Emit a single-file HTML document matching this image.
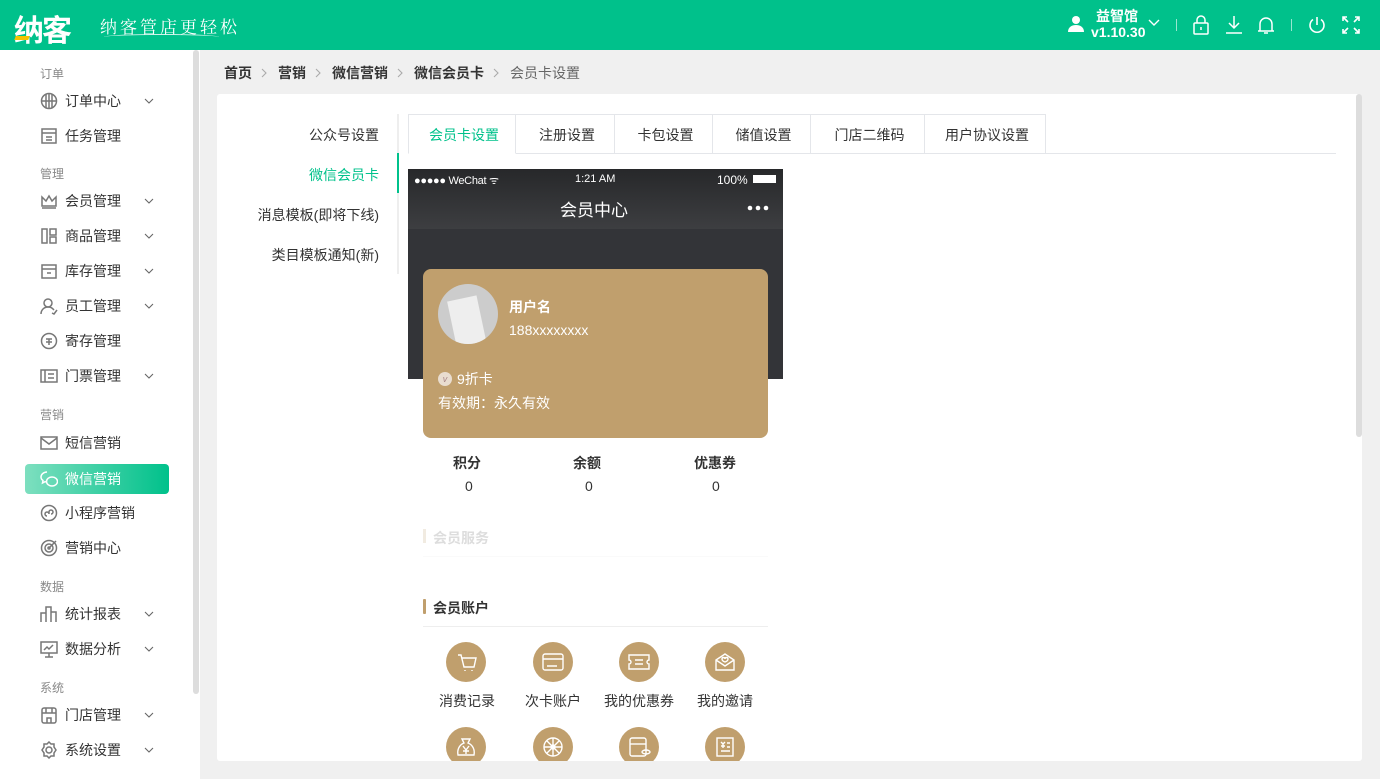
<!DOCTYPE html>
<html><head><meta charset="utf-8"><style>
*{margin:0;padding:0;box-sizing:border-box}
body{width:1380px;height:779px;overflow:hidden;background:#f0f0f0;font-family:"Liberation Sans","Noto Sans CJK SC",sans-serif;font-size:14px;color:#333;position:relative}
.hdr{position:absolute;left:0;top:0;width:1380px;height:50px;background:#00c18b;color:#fff}
.abs{position:absolute}
.side{position:absolute;left:0;top:50px;width:200px;height:729px;background:#fff}
.sb{position:absolute;left:193px;top:50px;width:6px;height:644px;background:#ddd;border-radius:3px}
.grp{position:absolute;left:40px;font-size:12px;color:#888}
.it{position:absolute;left:40px;height:28px;line-height:28px;font-size:14px;color:#333;display:flex;align-items:center}
.it svg{width:18px;height:18px;margin-right:7px;fill:none;stroke:#777;stroke-width:1.5}
.chev{position:absolute;left:144px;width:10px;height:6px}
.card{position:absolute;left:217px;top:94px;width:1145px;height:667px;background:#fff;border-radius:3px}
.tab{position:absolute;top:114px;height:40px;line-height:40px;text-align:center;border:1px solid #e4e6ea;border-left:none;font-size:14px;color:#333}
.sub{position:absolute;right:1001px;font-size:14px;color:#333;text-align:right}
.ic{position:absolute;width:40px;height:40px;border-radius:50%;background:#c09f6d}
.ic svg{width:40px;height:40px;fill:none;stroke:#fff;stroke-width:1.4}
.lb{position:absolute;width:90px;text-align:center;font-size:14px;color:#333}
.bc{display:inline-block;width:7px;height:10px;margin:0 10px 0 9px}
</style></head><body>
<svg width="0" height="0" style="position:absolute"><defs><symbol id="cv" viewBox="0 0 10 6"><path d="M1 1l4 4 4-4" stroke="#666" fill="none" stroke-width="1.1"/></symbol><symbol id="gt" viewBox="0 0 7 10"><path d="M1 1l4 4-4 4" stroke="#aaa" fill="none" stroke-width="1.1"/></symbol></defs></svg>
<div class="hdr">
 <div class="abs" style="left:14px;top:6px;font-size:30px;font-weight:bold;letter-spacing:-2px">纳客</div>
 <div class="abs" style="left:15px;top:36px;width:14px;height:4px;background:#f5c400;transform:skewX(-20deg)"></div>
 <div class="abs" style="left:100px;top:13px;font-size:17px;font-family:'Noto Serif CJK SC',serif;letter-spacing:3px">纳客管店更轻松</div>
 <div class="abs" style="left:104px;top:34px;width:115px;height:6px;border-top:1px solid rgba(255,255,255,.8);border-radius:60% 60% 0 0"></div>
 <svg class="abs" style="left:1067px;top:15px" width="18" height="18" viewBox="0 0 18 18"><circle cx="9" cy="5" r="4" fill="#fff"/><path d="M1 17c0-5 4-7 8-7s8 2 8 7z" fill="#fff"/></svg>
 <div class="abs" style="left:1096px;top:6px;font-size:14px;font-weight:bold">益智馆</div>
 <div class="abs" style="left:1091px;top:24px;font-size:14px;font-weight:bold">v1.10.30</div>
 <svg class="abs" style="left:1148px;top:19px" width="12" height="8" viewBox="0 0 12 8"><path d="M1 1l5 5 5-5" stroke="#fff" fill="none" stroke-width="1.4"/></svg>
 <div class="abs" style="left:1176px;top:19px;width:1px;height:12px;background:rgba(255,255,255,.6)"></div>
 <svg class="abs" style="left:1192px;top:15px" width="18" height="20" viewBox="0 0 18 20" fill="none" stroke="#fff" stroke-width="1.5"><rect x="2" y="8" width="14" height="11" rx="1"/><path d="M5 8V5a4 4 0 018 0v3M9 12v3"/></svg>
 <svg class="abs" style="left:1225px;top:15px" width="18" height="20" viewBox="0 0 18 20" fill="none" stroke="#fff" stroke-width="1.5"><path d="M9 1v12M4 8l5 5 5-5M1 18h16"/></svg>
 <svg class="abs" style="left:1257px;top:15px" width="18" height="20" viewBox="0 0 18 20" fill="none" stroke="#fff" stroke-width="1.5"><path d="M3 16V9a6 6 0 0112 0v7zM1 16h16M7 18h4"/></svg>
 <div class="abs" style="left:1291px;top:19px;width:1px;height:12px;background:rgba(255,255,255,.6)"></div>
 <svg class="abs" style="left:1307px;top:15px" width="20" height="20" viewBox="0 0 20 20" fill="none" stroke="#fff" stroke-width="1.6"><path d="M10 2v8M6 4.5a7 7 0 108 0"/></svg>
 <svg class="abs" style="left:1342px;top:16px" width="18" height="18" viewBox="0 0 18 18" fill="none" stroke="#fff" stroke-width="1.6"><path d="M1 5V1h4M1 1l5 5M17 5V1h-4M17 1l-5 5M1 13v4h4M1 17l5-5M17 13v4h-4M17 17l-5-5"/></svg>
</div>
<div class="side"></div><div class="sb"></div>
<div class="grp" style="top:65px">订单</div>
<div class="it" style="top:87px"><svg viewBox="0 0 18 18"><circle cx="9" cy="9" r="7.5"/><path d="M1.5 9h15M9 1.5v15M6 2.5v13M12 2.5v13"/></svg>订单中心</div><svg class="chev" style="top:98px"><use href="#cv"/></svg>
<div class="it" style="top:122px"><svg viewBox="0 0 18 18"><rect x="2" y="2" width="14" height="14"/><path d="M2 6h14M6 10h6M6 13h6"/></svg>任务管理</div>
<div class="grp" style="top:165px">管理</div>
<div class="it" style="top:187px"><svg viewBox="0 0 18 18"><path d="M2 5l4 4 3-5 3 5 4-4v9H2zM2 16h14"/></svg>会员管理</div><svg class="chev" style="top:198px"><use href="#cv"/></svg>
<div class="it" style="top:222px"><svg viewBox="0 0 18 18"><rect x="2" y="2" width="5" height="14"/><rect x="10" y="2" width="6" height="6"/><rect x="10" y="10" width="6" height="6"/></svg>商品管理</div><svg class="chev" style="top:233px"><use href="#cv"/></svg>
<div class="it" style="top:257px"><svg viewBox="0 0 18 18"><rect x="2" y="3" width="14" height="13"/><path d="M2 7h14M7 11h4"/></svg>库存管理</div><svg class="chev" style="top:268px"><use href="#cv"/></svg>
<div class="it" style="top:292px"><svg viewBox="0 0 18 18"><circle cx="8" cy="6" r="4"/><path d="M1 17c0-4 3-7 7-7s5 2 6 3M12 16l2 1 3-4"/></svg>员工管理</div><svg class="chev" style="top:303px"><use href="#cv"/></svg>
<div class="it" style="top:327px"><svg viewBox="0 0 18 18"><circle cx="9" cy="9" r="7.5"/><path d="M6 7h6M6 10h6M9 7v6"/></svg>寄存管理</div>
<div class="it" style="top:362px"><svg viewBox="0 0 18 18"><rect x="1" y="3" width="16" height="12"/><path d="M5 3v12M8 7h6M8 11h6"/></svg>门票管理</div><svg class="chev" style="top:373px"><use href="#cv"/></svg>
<div class="grp" style="top:406px">营销</div>
<div class="it" style="top:429px"><svg viewBox="0 0 18 18"><rect x="1" y="3" width="16" height="12"/><path d="M1 4l8 6 8-6"/></svg>短信营销</div>
<div class="abs" style="left:25px;top:464px;width:144px;height:30px;border-radius:4px;background:linear-gradient(90deg,#7ddfbf,#00c18b)"></div>
<div class="it" style="top:465px;color:#fff"><svg viewBox="0 0 18 18" style="stroke:#fff"><path d="M7 2C3.5 2 1 4.5 1 7c0 1.5.8 2.7 2 3.5L2.5 13l2.5-1.3c.6.2 1.3.3 2 .3"/><ellipse cx="12" cy="11.5" rx="5.5" ry="4.5"/></svg>微信营销</div>
<div class="it" style="top:499px"><svg viewBox="0 0 18 18"><circle cx="9" cy="9" r="7.5"/><path d="M7 12a2 2 0 112-2V8a2 2 0 112 2"/></svg>小程序营销</div>
<div class="it" style="top:534px"><svg viewBox="0 0 18 18"><circle cx="9" cy="9" r="7.5"/><circle cx="9" cy="9" r="4"/><circle cx="9" cy="9" r="1"/><path d="M9 9l7-7"/></svg>营销中心</div>
<div class="grp" style="top:578px">数据</div>
<div class="it" style="top:600px"><svg viewBox="0 0 18 18"><path d="M1 17V8h5v9M6 17V2h5v15M11 17V7h5v10"/></svg>统计报表</div><svg class="chev" style="top:611px"><use href="#cv"/></svg>
<div class="it" style="top:635px"><svg viewBox="0 0 18 18"><rect x="1" y="2" width="16" height="11"/><path d="M9 13v4M5 17h8M4 10l3-3 2 2 4-4"/></svg>数据分析</div><svg class="chev" style="top:646px"><use href="#cv"/></svg>
<div class="grp" style="top:679px">系统</div>
<div class="it" style="top:701px"><svg viewBox="0 0 18 18"><rect x="2" y="2" width="14" height="15" rx="2"/><path d="M2 7h14M6 2v5M12 2v5M7 17v-5h4v5"/></svg>门店管理</div><svg class="chev" style="top:712px"><use href="#cv"/></svg>
<div class="it" style="top:736px"><svg viewBox="0 0 18 18"><path d="M9 1l2 2h3v3l2 3-2 3v3h-3l-2 2-2-2H4v-3L2 9l2-3V3h3z"/><circle cx="9" cy="9" r="3"/></svg>系统设置</div><svg class="chev" style="top:747px"><use href="#cv"/></svg>

<div class="abs" style="left:224px;top:63px;font-size:14px;font-weight:bold;color:#333;white-space:nowrap">首页<svg class="bc"><use href="#gt"/></svg>营销<svg class="bc"><use href="#gt"/></svg>微信营销<svg class="bc"><use href="#gt"/></svg>微信会员卡<svg class="bc"><use href="#gt"/></svg><span style="font-weight:normal;color:#666">会员卡设置</span></div>
<div class="card"></div>
<div class="abs" style="left:1356px;top:94px;width:6px;height:343px;background:#ddd;border-radius:3px"></div>
<div class="sub" style="top:125px">公众号设置</div>
<div class="sub" style="top:165px;color:#00c18b">微信会员卡</div>
<div class="sub" style="top:205px">消息模板(即将下线)</div>
<div class="sub" style="top:245px">类目模板通知(新)</div>
<div class="abs" style="left:397px;top:114px;width:2px;height:160px;background:#eee"></div>
<div class="abs" style="left:397px;top:153px;width:2px;height:40px;background:#00c18b"></div>
<div class="abs" style="left:408px;top:153px;width:928px;height:1px;background:#e4e6ea"></div>
<div class="tab" style="left:408px;width:108px;border-left:1px solid #e4e6ea;border-bottom-color:#fff;color:#00c18b;padding-left:4px">会员卡设置</div>
<div class="tab" style="left:516px;width:99px;padding-left:4px">注册设置</div>
<div class="tab" style="left:615px;width:98px;padding-left:4px">卡包设置</div>
<div class="tab" style="left:713px;width:98px;padding-left:4px">储值设置</div>
<div class="tab" style="left:811px;width:114px;padding-left:4px">门店二维码</div>
<div class="tab" style="left:925px;width:121px;padding-left:4px">用户协议设置</div>

<div class="abs" style="left:408px;top:169px;width:375px;height:210px;background:#333438"></div>
<div class="abs" style="left:408px;top:169px;width:375px;height:60px;background:linear-gradient(#27282a,#3d3e41)"></div>
<div class="abs" style="left:414px;top:173px;font-size:11px;color:#fff;letter-spacing:-.3px">●●●●● WeChat ᯤ</div>
<div class="abs" style="left:575px;top:173px;font-size:11px;color:#fff">1:21 AM</div>
<div class="abs" style="left:717px;top:173px;font-size:12px;color:#fff">100%</div>
<div class="abs" style="left:753px;top:175px;width:23px;height:8px;background:#fff"></div>
<div class="abs" style="left:560px;top:196px;font-size:17px;color:#fff">会员中心</div>
<svg class="abs" style="left:747px;top:205px" width="22" height="6"><circle cx="3" cy="3" r="2.3" fill="#fff"/><circle cx="11" cy="3" r="2.3" fill="#fff"/><circle cx="19" cy="3" r="2.3" fill="#fff"/></svg>
<div class="abs" style="left:423px;top:269px;width:345px;height:169px;background:#c09f6d;border-radius:8px"></div>
<div class="abs" style="left:438px;top:284px;width:60px;height:60px;border-radius:50%;background:#ccc;overflow:hidden"><div style="position:absolute;left:14px;top:14px;width:30px;height:50px;background:#eee;transform:rotate(-12deg)"></div></div>
<div class="abs" style="left:509px;top:297px;font-size:14px;font-weight:bold;color:#fff">用户名</div>
<div class="abs" style="left:509px;top:322px;font-size:14px;color:#fff">188xxxxxxxx</div>
<div class="abs" style="left:438px;top:372px;width:14px;height:14px;border-radius:50%;background:#e9ddd0;font-size:9px;color:#a88;text-align:center;line-height:14px;font-style:italic">v</div>
<div class="abs" style="left:457px;top:369px;font-size:14px;color:#fff">9折卡</div>
<div class="abs" style="left:438px;top:393px;font-size:14px;color:#fff">有效期：永久有效</div>
<div class="abs" style="left:453px;top:453px;font-size:14px;font-weight:bold;color:#333">积分</div>
<div class="abs" style="left:573px;top:453px;font-size:14px;font-weight:bold;color:#333">余额</div>
<div class="abs" style="left:694px;top:453px;font-size:14px;font-weight:bold;color:#333">优惠券</div>
<div class="abs" style="left:465px;top:478px">0</div><div class="abs" style="left:585px;top:478px">0</div><div class="abs" style="left:712px;top:478px">0</div>
<div class="abs" style="left:423px;top:529px;width:3px;height:14px;background:#f1ebe1"></div>
<div class="abs" style="left:433px;top:528px;font-size:14px;font-weight:bold;color:#ddd">会员服务</div>
<div class="abs" style="left:423px;top:556px;width:345px;height:1px;background:#fafafa"></div>
<div class="abs" style="left:423px;top:599px;width:3px;height:15px;background:#c09f6d;border-radius:1px"></div>
<div class="abs" style="left:433px;top:598px;font-size:14px;font-weight:bold;color:#333">会员账户</div>
<div class="abs" style="left:423px;top:626px;width:345px;height:1px;background:#eee"></div>
<div class="ic" style="left:446px;top:642px"><svg viewBox="0 0 40 40"><path d="M12 13h3l3 12h10l2-9H16M19 28v1M26 28v1"/></svg></div>
<div class="ic" style="left:533px;top:642px"><svg viewBox="0 0 40 40"><rect x="10" y="12" width="20" height="16" rx="2"/><path d="M10 17h20M14 24h10"/></svg></div>
<div class="ic" style="left:619px;top:642px"><svg viewBox="0 0 40 40"><path d="M10 13h20v5a2 2 0 000 4v5H10v-5a2 2 0 000-4zM16 18h8M16 22h8"/></svg></div>
<div class="ic" style="left:705px;top:642px"><svg viewBox="0 0 40 40"><path d="M11 18l9-6 9 6v10H11zM11 18l9 6 9-6M17 17c0-2 3-2 3 0 0-2 3-2 3 0s-3 3-3 3-3-1-3-3"/></svg></div>
<div class="lb" style="left:422px;top:691px">消费记录</div>
<div class="lb" style="left:508px;top:691px">次卡账户</div>
<div class="lb" style="left:594px;top:691px">我的优惠券</div>
<div class="lb" style="left:680px;top:691px">我的邀请</div>
<div class="ic" style="left:446px;top:727px"><svg viewBox="0 0 40 40"><path d="M16 12h8l-2 4c5 2 7 7 6 12H12c-1-5 1-10 6-12zM17 19l3 4 3-4M20 23v4M17 24h6"/></svg></div>
<div class="ic" style="left:533px;top:727px"><svg viewBox="0 0 40 40"><circle cx="20" cy="20" r="9"/><circle cx="20" cy="20" r="2"/><path d="M20 11v18M11 20h18M14 14l12 12M26 14L14 26"/></svg></div>
<div class="ic" style="left:619px;top:727px"><svg viewBox="0 0 40 40"><rect x="11" y="11" width="16" height="18" rx="2"/><path d="M11 17h16"/><ellipse cx="27" cy="25" rx="4" ry="2"/></svg></div>
<div class="ic" style="left:705px;top:727px"><svg viewBox="0 0 40 40"><rect x="12" y="11" width="16" height="18"/><path d="M16 15l2 2 2-2M18 17v4M16 19h4M22 16h3M22 20h3M16 24h9"/></svg></div>
<div class="abs" style="left:200px;top:761px;width:1180px;height:18px;background:#f0f0f0"></div>
</body></html>
